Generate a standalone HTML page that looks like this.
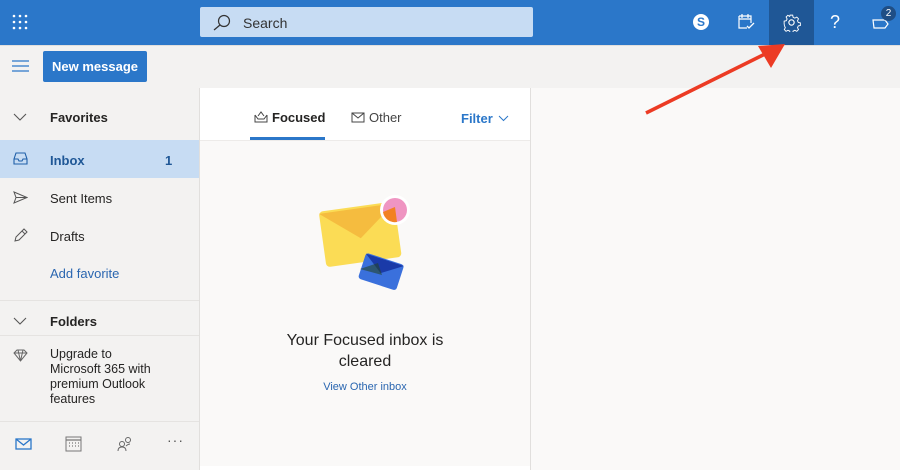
<!DOCTYPE html>
<html><head><style>
*{margin:0;padding:0;box-sizing:border-box}
body{width:900px;height:470px;overflow:hidden;font-family:"Liberation Sans",sans-serif;background:#faf9f8;position:relative;color:#252423}
.a{position:absolute}
.top{left:0;top:0;width:900px;height:45px;background:#2b77c9}
.bar2{left:0;top:45px;width:900px;height:43px;background:#f3f2f1;border-top:1px solid #e1dfdd}
.nav{left:0;top:88px;width:199px;height:382px;background:#f3f2f1}
.t{font-size:13px;position:absolute}
.b{font-weight:bold}
</style></head><body>
<div class="a top"></div>
<svg class="a" style="left:12px;top:14px" width="18" height="16"><g fill="#fff">
<circle cx="2" cy="2" r="1.3"/><circle cx="8" cy="2" r="1.3"/><circle cx="14" cy="2" r="1.3"/>
<circle cx="2" cy="8" r="1.3"/><circle cx="8" cy="8" r="1.3"/><circle cx="14" cy="8" r="1.3"/>
<circle cx="2" cy="14" r="1.3"/><circle cx="8" cy="14" r="1.3"/><circle cx="14" cy="14" r="1.3"/></g></svg>
<div class="a" style="left:200px;top:7px;width:333px;height:30px;background:#c7dcf3;border-radius:2px"></div>
<svg class="a" style="left:212px;top:13px" width="20" height="18"><circle cx="12" cy="8" r="5.5" fill="none" stroke="#333" stroke-width="1.2"/><path d="M8 12 L2 17" stroke="#333" stroke-width="1.3"/></svg>
<div class="t" style="left:243px;top:15px;color:#333;font-size:14px">Search</div>
<div class="a" style="left:769px;top:0;width:45px;height:45px;background:#1f5796"></div>
<div class="a" style="left:693px;top:14px;width:16px;height:16px;border-radius:50%;background:#fff;color:#2b77c9;font-weight:bold;font-size:12px;text-align:center;line-height:16px">S</div>
<svg class="a" style="left:737px;top:13px" width="18" height="18"><path d="M2 3h12v7M2 3v12h8M5 1v4M11 1v4M2 6h12" fill="none" stroke="#fff" stroke-width="1.2"/><path d="M10 13l2 2 5-5" fill="none" stroke="#fff" stroke-width="1.3"/></svg>
<svg class="a" style="left:782px;top:13px" width="19" height="19" viewBox="0 0 20 20"><circle cx="10" cy="10" r="2.8" fill="none" stroke="#fff" stroke-width="1.2"/><path d="M8.5 1.5h3l.5 2.5 2 1 2.3-1.2 2 2-1.2 2.3 1 2 2.4.5v3l-2.4.5-1 2 1.2 2.3-2 2-2.3-1.2-2 1-.5 2.4h-3l-.5-2.4-2-1-2.3 1.2-2-2 1.2-2.3-1-2L1.5 11.5v-3L4 8l1-2-1.2-2.3 2-2L8 3z" fill="none" stroke="#fff" stroke-width="1.1" transform="scale(.9) translate(1 1)"/></svg>
<div class="t" style="left:830px;top:12px;color:#fff;font-size:18px">?</div>
<svg class="a" style="left:872px;top:16px" width="20" height="14"><path d="M1 4h12l3 4-3 4H2z" fill="none" stroke="#fff" stroke-width="1.2"/></svg>
<div class="a" style="left:881px;top:6px;width:15px;height:15px;border-radius:50%;background:#1f4e85;color:#fff;font-size:10px;text-align:center;line-height:15px">2</div>
<div class="a bar2"></div>
<svg class="a" style="left:12px;top:59px" width="18" height="14"><path d="M0 2h17M0 7h17M0 12h17" stroke="#2b77c9" stroke-width="1.2"/></svg>
<div class="a" style="left:43px;top:51px;width:104px;height:31px;background:#2b77c9;border-radius:2px;color:#fff;font-weight:bold;font-size:13px;text-align:center;line-height:31px">New message</div>
<div class="a nav"></div>
<div class="a" style="left:0;top:140px;width:199px;height:38px;background:#c7dcf3"></div>
<svg class="a" style="left:13px;top:113px" width="14" height="9"><path d="M1 1l6 6 6-6" fill="none" stroke="#555" stroke-width="1.1"/></svg>
<div class="t b" style="left:50px;top:110px">Favorites</div>
<svg class="a" style="left:13px;top:152px" width="15" height="13"><path d="M1 7l2-6h9l2 6v5H1zM1 7h4l1 2h3l1-2h4" fill="none" stroke="#1f5fa8" stroke-width="1.1"/></svg>
<div class="t b" style="left:50px;top:153px;color:#1f5796">Inbox</div>
<div class="t b" style="left:165px;top:153px;color:#1f5796">1</div>
<svg class="a" style="left:13px;top:191px" width="15" height="13"><path d="M1 1l13 5.5L1 12l2-5.5zM3 6.5h11" fill="none" stroke="#555" stroke-width="1"/></svg>
<div class="t" style="left:50px;top:191px">Sent Items</div>
<svg class="a" style="left:13px;top:228px" width="15" height="15"><path d="M2 13l1-4 8-8 3 3-8 8zM9 3l3 3" fill="none" stroke="#555" stroke-width="1"/></svg>
<div class="t" style="left:50px;top:229px">Drafts</div>
<div class="t" style="left:50px;top:266px;color:#2a66b0">Add favorite</div>
<div class="a" style="left:0;top:300px;width:199px;height:1px;background:#e5e3e1"></div>
<svg class="a" style="left:13px;top:317px" width="14" height="9"><path d="M1 1l6 6 6-6" fill="none" stroke="#555" stroke-width="1.1"/></svg>
<div class="t b" style="left:50px;top:314px">Folders</div>
<div class="a" style="left:0;top:335px;width:199px;height:1px;background:#e5e3e1"></div>
<svg class="a" style="left:13px;top:349px" width="15" height="13"><path d="M1 4l3-3h7l3 3-6.5 8zM1 4h13M5 1l2.5 11M10 1L7.5 12" fill="none" stroke="#666" stroke-width="1"/></svg>
<div class="t" style="left:50px;top:347px;line-height:15px;font-size:12.5px">Upgrade to<br>Microsoft 365 with<br>premium Outlook<br>features</div>
<div class="a" style="left:0;top:421px;width:199px;height:1px;background:#e5e3e1"></div>
<svg class="a" style="left:15px;top:438px" width="18" height="12"><rect x="1" y="1" width="15" height="10" fill="none" stroke="#2b77c9" stroke-width="1.3"/><path d="M1 1l7.5 6L16 1" fill="none" stroke="#2b77c9" stroke-width="1.3"/></svg>
<svg class="a" style="left:65px;top:436px" width="17" height="16"><rect x="1" y="1" width="15" height="14" fill="none" stroke="#777" stroke-width="1"/><path d="M1 4h15M4 7h1M7 7h1M10 7h1M13 7h1M4 10h1M7 10h1M10 10h1M13 10h1" stroke="#777" stroke-width="1.2"/></svg>
<svg class="a" style="left:117px;top:436px" width="17" height="16"><circle cx="11" cy="4" r="2.5" fill="none" stroke="#666"/><circle cx="5" cy="8" r="2.5" fill="none" stroke="#666"/><path d="M1 15c0-3 2-4 4-4s4 1 4 4M9 10c1-1 2-2 4-2" fill="none" stroke="#666"/></svg>
<div class="t" style="left:167px;top:432px;color:#555;font-size:14px;letter-spacing:1px">···</div>
<div class="a" style="left:199px;top:88px;width:1px;height:382px;background:#e1dfdd"></div>
<div class="a" style="left:200px;top:88px;width:330px;height:53px;background:#fff;border-bottom:1px solid #edebe9"></div>
<div class="a" style="left:530px;top:88px;width:1px;height:382px;background:#e1dfdd"></div>
<div class="a" style="left:200px;top:466px;width:330px;height:4px;background:#fff"></div>
<svg class="a" style="left:254px;top:110px" width="15" height="13"><path d="M1 5v7h12V5M1 5l3 4h6l3-4M4 6l3-4 3 4" fill="none" stroke="#444" stroke-width="1"/></svg>
<div class="t b" style="left:272px;top:110px">Focused</div>
<div class="a" style="left:250px;top:137px;width:75px;height:3px;background:#2b77c9"></div>
<svg class="a" style="left:351px;top:112px" width="16" height="12"><rect x="1" y="1" width="12" height="9" fill="none" stroke="#444"/><path d="M1 1l6 5 6-5" fill="none" stroke="#444"/></svg>
<div class="t" style="left:369px;top:110px;color:#444">Other</div>
<div class="t b" style="left:461px;top:111px;color:#2b77c9">Filter</div>
<svg class="a" style="left:498px;top:115px" width="11" height="7"><path d="M1 1l4.5 4.5L10 1" fill="none" stroke="#2b77c9"/></svg>
<svg class="a" style="left:310px;top:185px" width="110" height="110">
<g transform="rotate(-8 45 48)"><rect x="12" y="22" width="76" height="56" rx="4" fill="#fbdc55"/><path d="M12 24l38 30 38-30z" fill="#f5bc3f"/></g>
<g transform="rotate(18 70 90)"><rect x="50" y="73" width="40" height="27" rx="3" fill="#3a70dc"/><path d="M50 74l20 14 20-14z" fill="#1a3aa8"/></g>
<path d="M50 84 l18 -6 4 12z" fill="#25452a" opacity=".6"/>
<circle cx="85" cy="25" r="15" fill="#fff"/><circle cx="85" cy="25" r="12" fill="#ef95c2"/><path d="M73 27 a12 12 0 0 0 14 10 L85 22z" fill="#f28123"/>
</svg>
<div class="a" style="left:200px;top:330px;width:330px;text-align:center;font-size:16px;line-height:21px;color:#252423">Your Focused inbox is<br>cleared</div>
<div class="a" style="left:200px;top:381px;width:330px;text-align:center;font-size:11px;color:#2a66b0">View Other inbox</div>
<svg class="a" style="left:640px;top:38px" width="150" height="80"><path d="M6 75 L125 16" stroke="#ec3b24" stroke-width="3.5"/><path d="M145 6 L118 8 L131 30z" fill="#ec3b24"/></svg>
</body></html>
